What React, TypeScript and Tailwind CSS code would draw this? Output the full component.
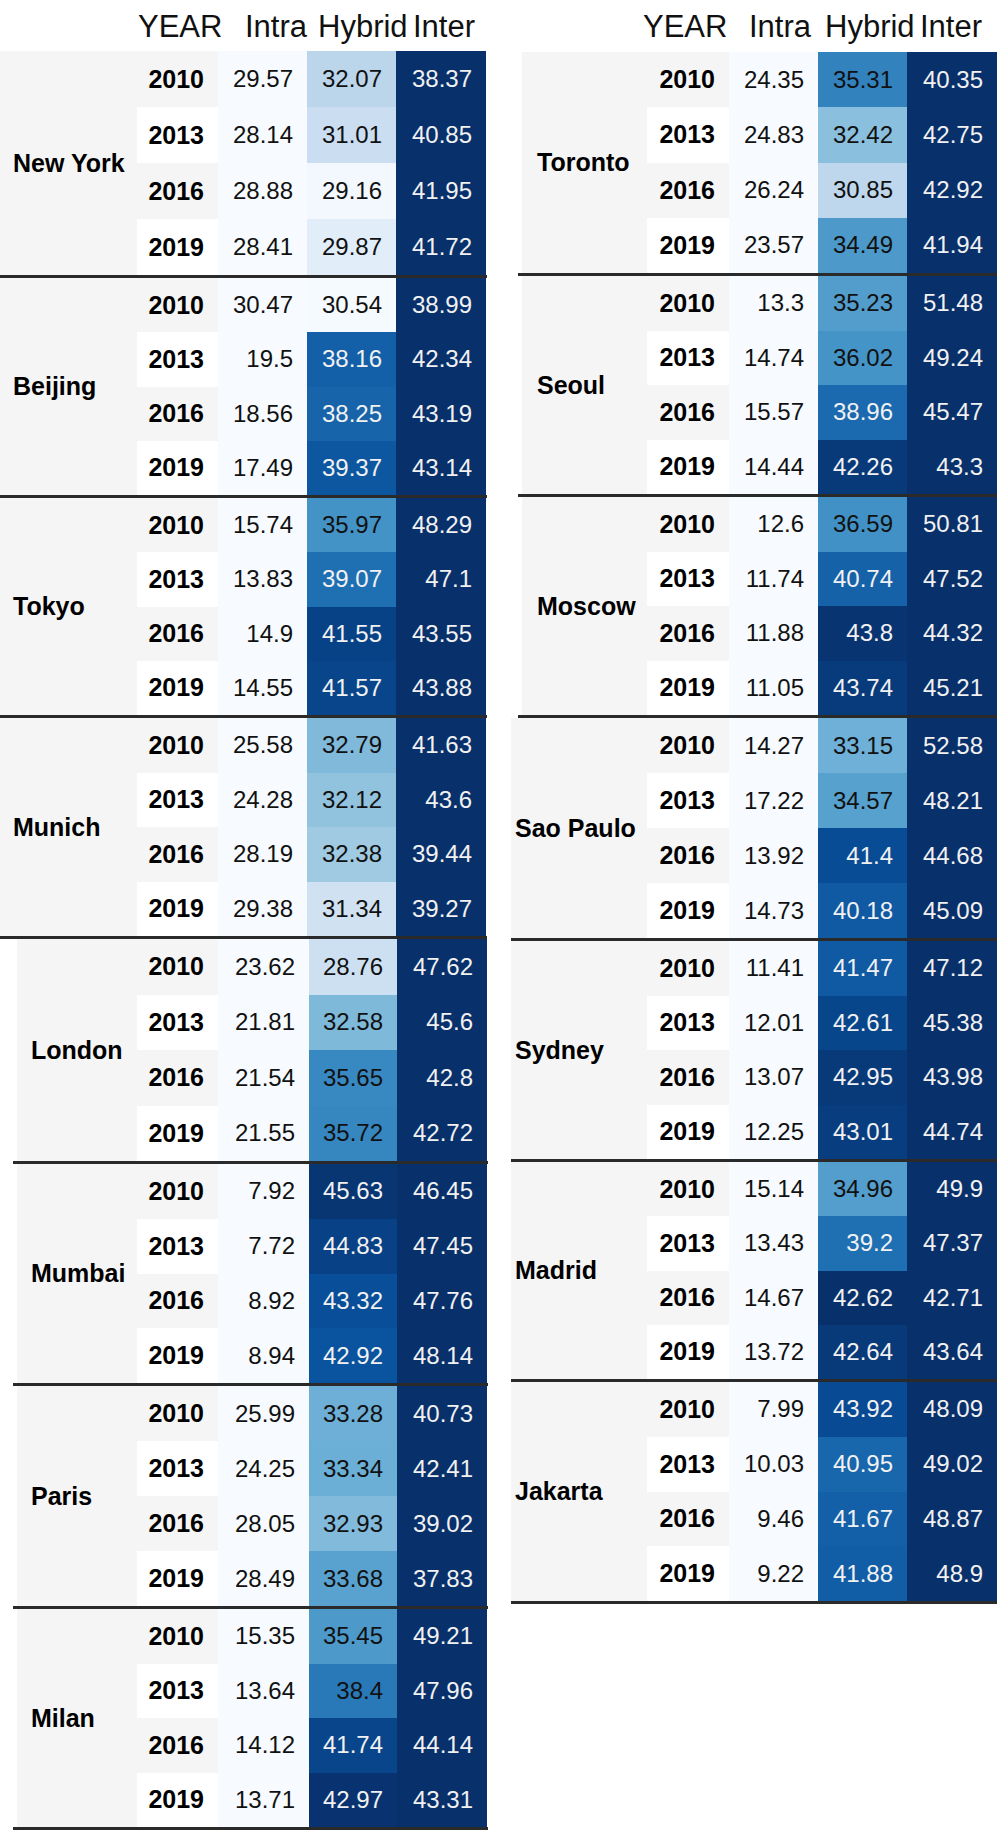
type Row = [string, string, string, string];

type City = {
  name: string;
  rowH: string;
  rows: Row[];
};

type Group = {
  city: string;
  line: string;
  cols: [string, string, string, string];
  cities: City[];
};

type Side = {
  header: string;
  headerCols: string[];
  groups: Group[];
};

// matplotlib "Blues" stops
const BLUES = [
  [247, 251, 255],
  [222, 235, 247],
  [198, 219, 239],
  [158, 202, 225],
  [107, 174, 214],
  [66, 146, 198],
  [33, 113, 181],
  [8, 81, 156],
  [8, 48, 107],
];

function blues(t: number) {
  const x = Math.min(Math.max(t, 0), 1) * 8;
  const i = Math.min(Math.floor(x), 7);
  const f = x - i;
  const [r, g, b] = BLUES[i].map((v, k) => Math.round(v + (BLUES[i + 1][k] - v) * f));
  return `rgb(${r}, ${g}, ${b})`;
}

const left: Side = {
  header: "h-[51px] pl-[138px]",
  headerCols: ["w-[107px]", "w-[73px]", "w-[95px]"],
  groups: [
    {
      city: "w-[137px] pl-[13px]",
      line: "w-[487px]",
      cols: ["w-[81px]", "w-[89px]", "w-[89px]", "w-[90px]"],
      cities: [
        {
          name: "New York",
          rowH: "h-[56px]",
          rows: [
            ["2010", "29.57", "32.07", "38.37"],
            ["2013", "28.14", "31.01", "40.85"],
            ["2016", "28.88", "29.16", "41.95"],
            ["2019", "28.41", "29.87", "41.72"],
          ],
        },
        {
          name: "Beijing",
          rowH: "h-[54.25px]",
          rows: [
            ["2010", "30.47", "30.54", "38.99"],
            ["2013", "19.5", "38.16", "42.34"],
            ["2016", "18.56", "38.25", "43.19"],
            ["2019", "17.49", "39.37", "43.14"],
          ],
        },
        {
          name: "Tokyo",
          rowH: "h-[54.25px]",
          rows: [
            ["2010", "15.74", "35.97", "48.29"],
            ["2013", "13.83", "39.07", "47.1"],
            ["2016", "14.9", "41.55", "43.55"],
            ["2019", "14.55", "41.57", "43.88"],
          ],
        },
        {
          name: "Munich",
          rowH: "h-[54.5px]",
          rows: [
            ["2010", "25.58", "32.79", "41.63"],
            ["2013", "24.28", "32.12", "43.6"],
            ["2016", "28.19", "32.38", "39.44"],
            ["2019", "29.38", "31.34", "39.27"],
          ],
        },
      ],
    },
    {
      city: "ml-[17px] w-[120px] pl-[14px]",
      line: "ml-[13px] w-[475px]",
      cols: ["w-[81px]", "w-[91px]", "w-[88px]", "w-[90px]"],
      cities: [
        {
          name: "London",
          rowH: "h-[55.5px]",
          rows: [
            ["2010", "23.62", "28.76", "47.62"],
            ["2013", "21.81", "32.58", "45.6"],
            ["2016", "21.54", "35.65", "42.8"],
            ["2019", "21.55", "35.72", "42.72"],
          ],
        },
        {
          name: "Mumbai",
          rowH: "h-[54.75px]",
          rows: [
            ["2010", "7.92", "45.63", "46.45"],
            ["2013", "7.72", "44.83", "47.45"],
            ["2016", "8.92", "43.32", "47.76"],
            ["2019", "8.94", "42.92", "48.14"],
          ],
        },
        {
          name: "Paris",
          rowH: "h-[55px]",
          rows: [
            ["2010", "25.99", "33.28", "40.73"],
            ["2013", "24.25", "33.34", "42.41"],
            ["2016", "28.05", "32.93", "39.02"],
            ["2019", "28.49", "33.68", "37.83"],
          ],
        },
        {
          name: "Milan",
          rowH: "h-[54.5px]",
          rows: [
            ["2010", "15.35", "35.45", "49.21"],
            ["2013", "13.64", "38.4", "47.96"],
            ["2016", "14.12", "41.74", "44.14"],
            ["2019", "13.71", "42.97", "43.31"],
          ],
        },
      ],
    },
  ],
};

const right: Side = {
  header: "h-[52px] pl-[143px]",
  headerCols: ["w-[106px]", "w-[76px]", "w-[95px]"],
  groups: [
    {
      city: "ml-[22px] w-[125px] pl-[15px]",
      line: "ml-[18px] w-[479px]",
      cols: ["w-[82px]", "w-[89px]", "w-[89px]", "w-[90px]"],
      cities: [
        {
          name: "Toronto",
          rowH: "h-[55.25px]",
          rows: [
            ["2010", "24.35", "35.31", "40.35"],
            ["2013", "24.83", "32.42", "42.75"],
            ["2016", "26.24", "30.85", "42.92"],
            ["2019", "23.57", "34.49", "41.94"],
          ],
        },
        {
          name: "Seoul",
          rowH: "h-[54.5px]",
          rows: [
            ["2010", "13.3", "35.23", "51.48"],
            ["2013", "14.74", "36.02", "49.24"],
            ["2016", "15.57", "38.96", "45.47"],
            ["2019", "14.44", "42.26", "43.3"],
          ],
        },
        {
          name: "Moscow",
          rowH: "h-[54.5px]",
          rows: [
            ["2010", "12.6", "36.59", "50.81"],
            ["2013", "11.74", "40.74", "47.52"],
            ["2016", "11.88", "43.8", "44.32"],
            ["2019", "11.05", "43.74", "45.21"],
          ],
        },
      ],
    },
    {
      city: "ml-[11px] w-[136px] pl-[4px]",
      line: "ml-[11px] w-[486px]",
      cols: ["w-[82px]", "w-[89px]", "w-[89px]", "w-[90px]"],
      cities: [
        {
          name: "Sao Paulo",
          rowH: "h-[55px]",
          rows: [
            ["2010", "14.27", "33.15", "52.58"],
            ["2013", "17.22", "34.57", "48.21"],
            ["2016", "13.92", "41.4", "44.68"],
            ["2019", "14.73", "40.18", "45.09"],
          ],
        },
        {
          name: "Sydney",
          rowH: "h-[54.5px]",
          rows: [
            ["2010", "11.41", "41.47", "47.12"],
            ["2013", "12.01", "42.61", "45.38"],
            ["2016", "13.07", "42.95", "43.98"],
            ["2019", "12.25", "43.01", "44.74"],
          ],
        },
        {
          name: "Madrid",
          rowH: "h-[54.25px]",
          rows: [
            ["2010", "15.14", "34.96", "49.9"],
            ["2013", "13.43", "39.2", "47.37"],
            ["2016", "14.67", "42.62", "42.71"],
            ["2019", "13.72", "42.64", "43.64"],
          ],
        },
        {
          name: "Jakarta",
          rowH: "h-[54.75px]",
          rows: [
            ["2010", "7.99", "43.92", "48.09"],
            ["2013", "10.03", "40.95", "49.02"],
            ["2016", "9.46", "41.67", "48.87"],
            ["2019", "9.22", "41.88", "48.9"],
          ],
        },
      ],
    },
  ],
};

const cell = "flex items-center justify-end pr-[14px] leading-none";

function CityBlock({ group, city }: { group: Group; city: City }) {
  const [yearW, intraW, hybridW, interW] = group.cols;
  return (
    <div className="flex flex-col">
      <div className="flex">
        <div className={`${group.city} flex items-center bg-[#f5f5f5] text-[25px] font-bold leading-none text-black`}>
          {city.name}
        </div>
        <div className="flex flex-col">
          {city.rows.map(([year, intra, hybrid, inter], i) => {
            const lo = parseFloat(intra);
            const hi = parseFloat(inter);
            const t = (parseFloat(hybrid) - lo) / (hi - lo);
            return (
              <div key={year} className={`flex ${city.rowH}`}>
                <div className={`${yearW} ${cell} text-[25px] font-bold text-black ${i % 2 === 0 ? "bg-[#f5f5f5]" : "bg-white"}`}>
                  {year}
                </div>
                <div className={`${intraW} ${cell} bg-[#f7fbff] text-[24px] text-[#111]`}>{intra}</div>
                <div
                  className={`${hybridW} ${cell} text-[24px]`}
                  style={{ backgroundColor: blues(t), color: t > 0.74 ? "#f1f1f1" : "#111111" }}
                >
                  {hybrid}
                </div>
                <div className={`${interW} ${cell} bg-[#08306b] text-[24px] text-[#f1f1f1]`}>{inter}</div>
              </div>
            );
          })}
        </div>
      </div>
      <div className={`${group.line} h-[3px] bg-[#2a2a2a]`} />
    </div>
  );
}

function Table({ side }: { side: Side }) {
  return (
    <div className="flex w-[500px] flex-col">
      <div className={`${side.header} flex pt-[11px] text-[31px] leading-[31px] text-[#111]`}>
        <span className={side.headerCols[0]}>YEAR</span>
        <span className={side.headerCols[1]}>Intra</span>
        <span className={side.headerCols[2]}>Hybrid</span>
        <span>Inter</span>
      </div>
      {side.groups.map((group) =>
        group.cities.map((city) => <CityBlock key={city.name} group={group} city={city} />),
      )}
    </div>
  );
}

export default function App() {
  return (
    <div className="flex h-[1833px] w-[1000px] overflow-hidden bg-white font-['Liberation_Sans',Arial,sans-serif]">
      <Table side={left} />
      <Table side={right} />
    </div>
  );
}
